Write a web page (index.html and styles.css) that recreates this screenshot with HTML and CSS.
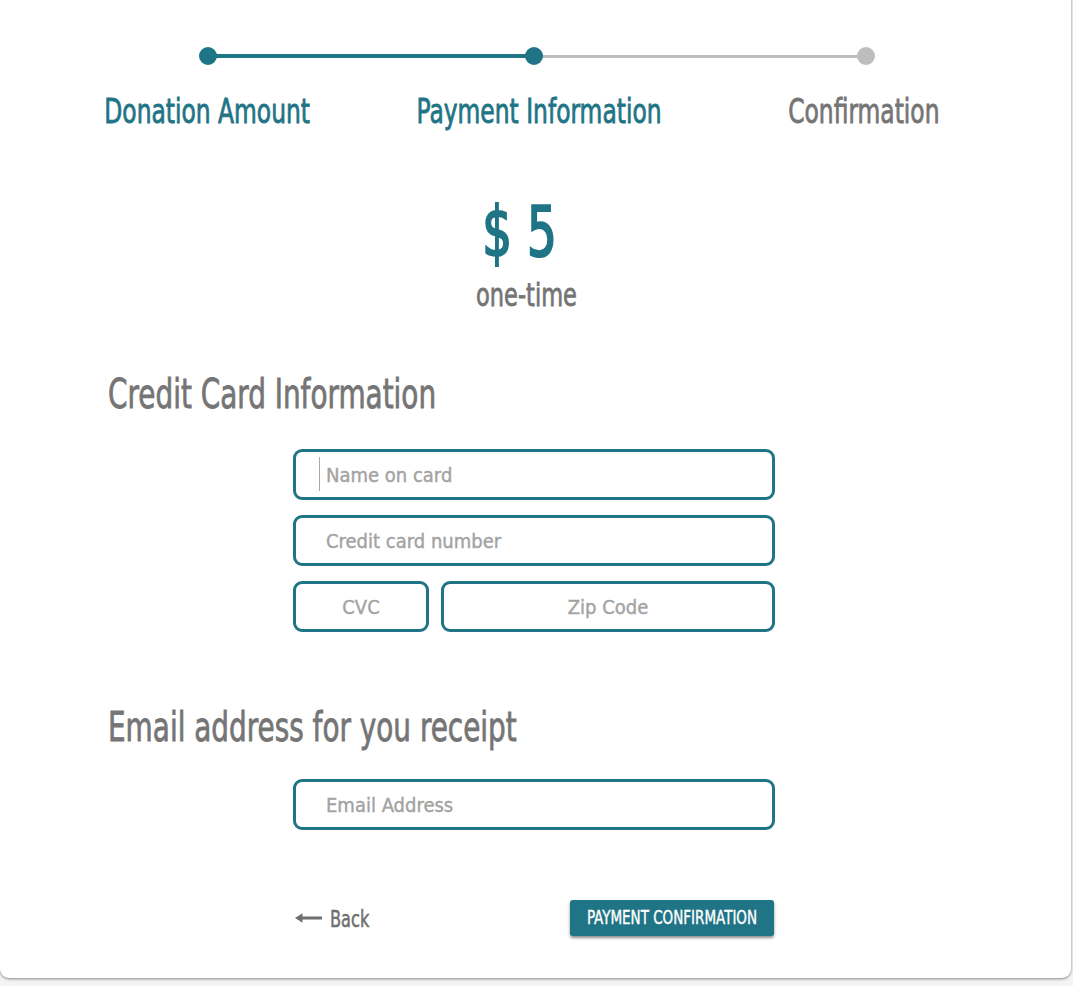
FILE: index.html
```html
<!DOCTYPE html>
<html lang="en">
<head>
<meta charset="utf-8">
<title>Payment Information</title>
<link rel="stylesheet" href="styles.css">
</head>
<body>
<div class="card">
  <div class="steps">
    <div class="track">
      <div class="seg seg-done"></div>
      <div class="seg seg-todo"></div>
      <span class="dot dot-1 done"></span>
      <span class="dot dot-2 done"></span>
      <span class="dot dot-3"></span>
    </div>
    <div class="labels">
      <div class="label active">Donation Amount</div>
      <div class="label active">Payment Information</div>
      <div class="label">Confirmation</div>
    </div>
  </div>

  <div class="amount">
    <div class="amount-value">$ 5</div>
    <div class="amount-freq">one-time</div>
  </div>

  <h2 class="section-title">Credit Card Information</h2>
  <div class="form card-form">
    <div class="field focused"><input class="input" type="text" placeholder="Name on card"></div>
    <div class="field"><input class="input" type="text" placeholder="Credit card number"></div>
    <div class="row">
      <div class="field cvc"><input class="input center" type="text" placeholder="CVC"></div>
      <div class="field zip"><input class="input center" type="text" placeholder="Zip Code"></div>
    </div>
  </div>

  <h2 class="section-title email-title">Email address for you receipt</h2>
  <div class="form email-form">
    <div class="field"><input class="input" type="email" placeholder="Email Address"></div>
  </div>

  <div class="actions">
    <a class="back" href="#"><svg class="arrow" width="27" height="10" viewBox="0 0 27 10"><path d="M0 5 L7.5 0.3 L7.5 3.6 L27 3.6 L27 6.4 L7.5 6.4 L7.5 9.7 Z" fill="#6f6f6f"/></svg><span class="back-text">Back</span></a>
    <button class="btn" type="button"><span class="btn-text">Payment Confirmation</span></button>
  </div>
</div>
</body>
</html>
```
FILE: styles.css
```css
* { box-sizing: border-box; }
html, body { margin: 0; padding: 0; background: #f4f4f4; }
body {
  font-family: "DejaVu Sans Condensed", "DejaVu Sans", sans-serif;
  font-stretch: condensed;
  color: #757575;
  height: 986px;
  overflow: hidden;
}
.card {
  width: 1071px;
  height: 988px;
  margin-top: -10px;
  background: #fff;
  border-radius: 0 0 9px 9px;
  box-shadow: 0 1px 3px rgba(0,0,0,0.45);
  padding-top: 57px;
}
.steps { margin: 0 43px; }
.track {
  position: relative;
  height: 18px;
}
.seg {
  position: absolute;
  top: 7px;
  height: 4px;
}
.seg-done { left: 165px; width: 326px; background: #1f7485; }
.seg-todo { left: 491px; width: 332px; background: #bdbdbd; height: 3px; top: 8px; }
.dot {
  position: absolute;
  top: 0;
  width: 18px;
  height: 18px;
  border-radius: 50%;
  background: #bdbdbd;
}
.dot.done { background: #1f7485; }
.dot-1 { left: 156px; }
.dot-2 { left: 482px; }
.dot-3 { left: 814px; }
.labels {
  display: grid;
  grid-template-columns: 1fr 1fr 1fr;
  margin-top: 28px;
}
.label {
  text-align: center;
  font-size: 26px;
  line-height: 36px;
  color: #757575;
  transform: scaleY(1.32);
  -webkit-text-stroke: 0.6px currentColor;
}
.label.active { color: #1f7485; }
.label:nth-child(2) { padding-left: 7px; }

.amount { text-align: center; margin-top: 67px; padding-right: 18px; }
.amount-value {
  color: #1f7485;
  font-size: 52px;
  line-height: 72px;
  padding-right: 14px;
  transform: scaleY(1.34);
  -webkit-text-stroke: 1.6px currentColor;
}
.amount-freq {
  font-size: 25px;
  line-height: 34px;
  margin-top: 11px;
  transform: scaleY(1.3);
  -webkit-text-stroke: 0.6px currentColor;
}

.section-title {
  margin: 57px 0 0 108px;
  font-size: 31px;
  line-height: 48px;
  font-weight: 400;
  color: #757575;
  transform: scaleY(1.3);
  transform-origin: left center;
  -webkit-text-stroke: 0.6px currentColor;
}
.email-title { margin-top: 71px; }

.form {
  width: 482px;
  margin: 31px 0 0 293px;
  display: flex;
  flex-direction: column;
  gap: 15px;
}
.email-form { margin-top: 28px; }
.row { display: flex; gap: 12px; }
.field { position: relative; }
.cvc { width: 136px; }
.zip { flex: 1; }
.input {
  display: block;
  width: 100%;
  height: 51px;
  border: 3px solid #1f7485;
  border-radius: 9px;
  padding: 0 0 0 30px;
  font-family: inherit;
  font-stretch: condensed;
  font-size: 20px;
  color: #555;
  background: #fff;
  outline: none;
}
.input.center { text-align: center; padding: 0; }
.input::placeholder { color: #a3a3a3; -webkit-text-stroke: 0.4px #a3a3a3; }
.focused::after {
  content: "";
  position: absolute;
  left: 26px;
  top: 8px;
  width: 1px;
  height: 34px;
  background: #a8a8a8;
}

.actions {
  width: 482px;
  margin: 70px 0 0 293px;
  display: flex;
  justify-content: space-between;
  align-items: center;
}
.back {
  display: flex;
  align-items: center;
  gap: 8px;
  text-decoration: none;
  color: #6f6f6f;
  font-size: 18px;
  margin-left: 2px;
}
.back-text { display: inline-block; transform: scaleY(1.3); -webkit-text-stroke: 0.4px currentColor; }
.arrow { display: block; }
.btn {
  width: 204px;
  height: 36px;
  background: #1f7485;
  color: #fff;
  border: none;
  border-radius: 3px;
  font-family: inherit;
  font-stretch: condensed;
  font-size: 15px;
  text-transform: uppercase;
  box-shadow: 0 2px 3px rgba(0,0,0,0.45);
  margin-right: 1px;
  padding: 0;
  white-space: nowrap;
}
.btn-text { display: inline-block; transform: scaleY(1.25); -webkit-text-stroke: 0.3px currentColor; }
```
